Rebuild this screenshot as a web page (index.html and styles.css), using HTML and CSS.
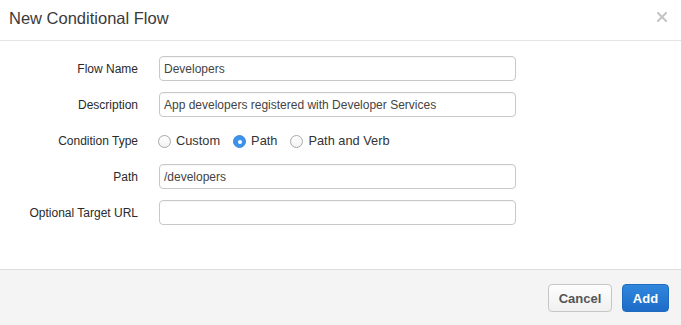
FILE: index.html
```html
<!DOCTYPE html>
<html>
<head>
<meta charset="utf-8">
<title>New Conditional Flow</title>
<link rel="stylesheet" href="styles.css">
</head>
<body>
<div class="modal">
  <div class="modal-header">
    <h3 class="modal-title">New Conditional Flow</h3>
    <span class="close" aria-label="Close">
      <svg width="10" height="10" viewBox="0 0 10 10"><path d="M1 1L9 9M9 1L1 9" stroke="#c4c4c4" stroke-width="2" stroke-linecap="square"/></svg>
    </span>
  </div>
  <div class="modal-body">
    <div class="row">
      <label class="lbl">Flow Name</label>
      <div class="field"><input class="input" type="text" value="Developers"></div>
    </div>
    <div class="row">
      <label class="lbl">Description</label>
      <div class="field"><input class="input" type="text" value="App developers registered with Developer Services"></div>
    </div>
    <div class="row">
      <label class="lbl">Condition Type</label>
      <div class="field radios">
        <span class="radio-opt"><span class="radio"></span><span class="rtext">Custom</span></span>
        <span class="radio-opt"><span class="radio checked"></span><span class="rtext">Path</span></span>
        <span class="radio-opt"><span class="radio"></span><span class="rtext">Path and Verb</span></span>
      </div>
    </div>
    <div class="row">
      <label class="lbl">Path</label>
      <div class="field"><input class="input" type="text" value="/developers"></div>
    </div>
    <div class="row">
      <label class="lbl">Optional Target URL</label>
      <div class="field"><input class="input" type="text" value=""></div>
    </div>
  </div>
  <div class="modal-footer">
    <button class="btn btn-default">Cancel</button>
    <button class="btn btn-primary">Add</button>
  </div>
</div>
</body>
</html>
```
FILE: styles.css
```css
html, body {
  margin: 0;
  padding: 0;
  background: #fff;
}
body {
  font-family: "Liberation Sans", Arial, sans-serif;
  color: #333;
  width: 681px;
  height: 325px;
  overflow: hidden;
}
.modal {
  display: flex;
  flex-direction: column;
  height: 325px;
}
.modal-header {
  height: 40px;
  border-bottom: 1px solid #e5e5e5;
  display: flex;
  align-items: center;
  justify-content: space-between;
  padding: 0 14px 0 9px;
}
.modal-title {
  margin: 0;
  font-size: 16.5px;
  font-weight: normal;
  color: #3a3a3a;
  line-height: 20px;
  padding-bottom: 4px;
}
.close {
  display: flex;
  width: 10px;
  height: 10px;
  margin-bottom: 6px;
}
.modal-body {
  flex: 1;
  padding-top: 15px;
  display: flex;
  flex-direction: column;
  gap: 11px;
}
.row {
  display: flex;
  align-items: center;
  height: 25px;
  gap: 21px;
}
.lbl {
  width: 138px;
  text-align: right;
  font-size: 12px;
  color: #2a2a2a;
}
.field {
  width: 357px;
}
.input {
  box-sizing: border-box;
  width: 357px;
  height: 25px;
  border: 1px solid #c8c8c8;
  border-radius: 4px;
  padding: 0 0 0 4px;
  font-family: "Liberation Sans", Arial, sans-serif;
  font-size: 12px;
  color: #444;
  background: #fff;
  outline: none;
  box-shadow: inset 0 1px 1px rgba(0,0,0,0.04);
}
.radios {
  display: flex;
  align-items: center;
  gap: 13px;
  margin-left: -1px;
  padding-top: 2px;
}
.radio-opt {
  display: flex;
  align-items: center;
  gap: 5px;
}
.radio {
  box-sizing: border-box;
  width: 13px;
  height: 13px;
  border-radius: 50%;
  border: 1px solid #a8a8a8;
  background: linear-gradient(#fff, #f2f2f2);
  display: flex;
  align-items: center;
  justify-content: center;
}
.radio.checked {
  border-color: #3a8be0;
  background: #3f92ea;
}
.radio.checked::after {
  content: "";
  width: 4px;
  height: 4px;
  border-radius: 50%;
  background: #fff;
}
.rtext {
  font-size: 12.8px;
  color: #333;
  margin-top: -3px;
}
.modal-footer {
  height: 56px;
  border-top: 1px solid #dddddd;
  background: #f4f4f4;
  display: flex;
  justify-content: flex-end;
  align-items: flex-start;
  padding: 14px 12px 0 0;
  box-sizing: border-box;
  gap: 10px;
}
.btn {
  height: 28px;
  border-radius: 4px;
  font-family: "Liberation Sans", Arial, sans-serif;
  font-size: 13px;
  font-weight: bold;
  padding: 0;
  cursor: pointer;
}
.btn-default {
  width: 64px;
  color: #555;
  border: 1px solid #c6c6c6;
  background: linear-gradient(#fdfdfd, #f0f0f0);
}
.btn-primary {
  width: 47px;
  color: #fff;
  border: 1px solid #1f6bbf;
  background: linear-gradient(#2f87dc, #1e6cc8);
}
```
